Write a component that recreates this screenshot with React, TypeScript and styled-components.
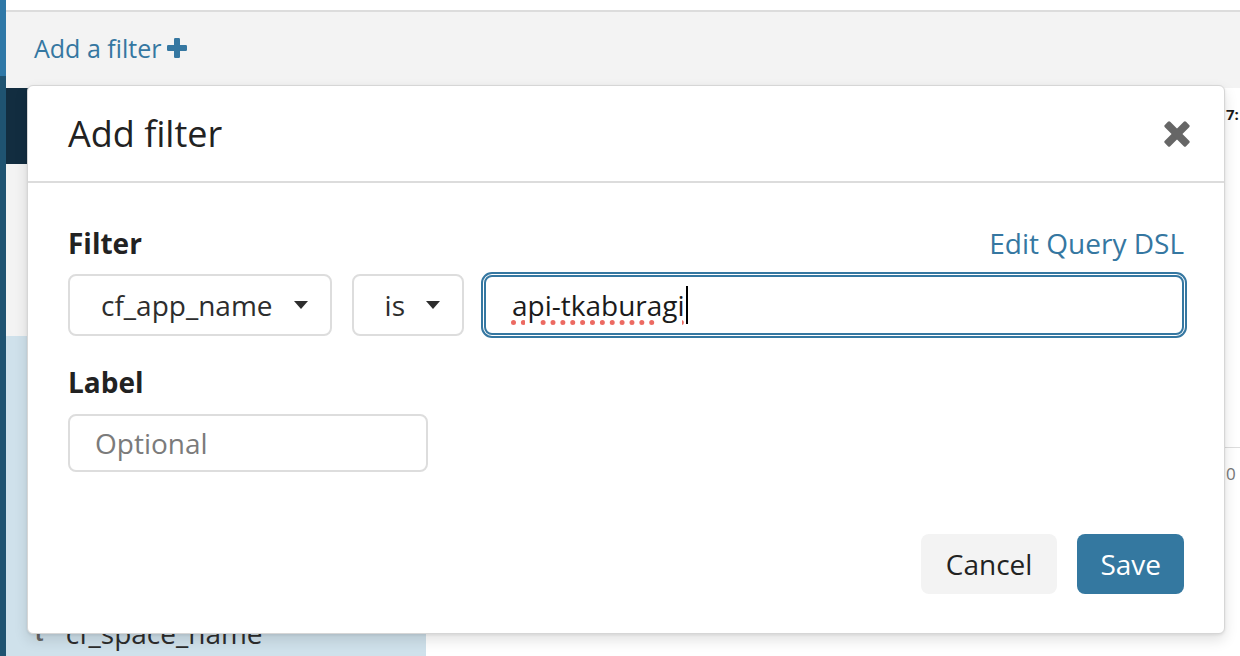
import styled, { createGlobalStyle } from "styled-components";

const GlobalStyle = createGlobalStyle`
  html, body {
    margin: 0;
    padding: 0;
    background: #ffffff;
    overflow: hidden;
  }
  body {
    font-family: "Open Sans", "DejaVu Sans", sans-serif;
    color: #222222;
  }
  * {
    box-sizing: border-box;
  }
`;

const BLUE = "#3577a1";

const Page = styled.div`
  position: relative;
  display: flex;
  width: 1240px;
  height: 656px;
  overflow: hidden;
`;

const NavRail = styled.div`
  width: 6px;
  flex-shrink: 0;
  background: linear-gradient(to bottom, #2f78a7 0, #2f78a7 76px, #1f5371 76px);
`;

const Main = styled.div`
  flex: 1;
  display: flex;
  flex-direction: column;
  min-width: 0;
`;

const TopStrip = styled.div`
  height: 12px;
  background: #ffffff;
  border-bottom: 2px solid #dcdcdc;
`;

const FilterBar = styled.div`
  height: 76px;
  display: flex;
  align-items: center;
  gap: 6px;
  padding: 0 0 4px 28px;
  background: #f3f3f3;
  color: ${BLUE};
  font-size: 25px;
`;

const Workspace = styled.div`
  flex: 1;
  display: flex;
  min-width: 0;
`;

const Sidebar = styled.div`
  width: 420px;
  flex-shrink: 0;
  display: flex;
  flex-direction: column;
`;

const NavyBlock = styled.div`
  height: 76px;
  background: #122d40;
`;

const GrayBlock = styled.div`
  height: 172px;
  background: #f3f3f3;
`;

const FieldList = styled.div`
  flex: 1;
  display: flex;
  flex-direction: column;
  justify-content: flex-end;
  padding-bottom: 5px;
  background: #cfe1eb;
`;

const FieldRow = styled.div`
  display: flex;
  align-items: center;
  gap: 22px;
  padding-left: 29px;
  height: 36px;
  font-size: 28px;
  color: #2d2d2d;
`;

const FieldType = styled.span`
  font-size: 20px;
  font-weight: 700;
  color: #666666;
`;

const Results = styled.div`
  flex: 1;
  min-width: 0;
  overflow: hidden;
  display: flex;
  flex-direction: column;
  background: #ffffff;
`;

const DocRow = styled.div<{ $tall?: boolean }>`
  display: grid;
  grid-template-columns: 800px 1fr;
  height: ${({ $tall }) => ($tall ? "360px" : "auto")};
  padding-top: ${({ $tall }) => ($tall ? "16px" : "14px")};
  border-bottom: ${({ $tall }) => ($tall ? "1px solid #dddddd" : "none")};
`;

const DocCell = styled.div<{ $muted?: boolean }>`
  font-size: ${({ $muted }) => ($muted ? "17px" : "15px")};
  font-weight: ${({ $muted }) => ($muted ? 400 : 700)};
  color: ${({ $muted }) => ($muted ? "#777777" : "#1b1b1b")};
  white-space: nowrap;
`;

/* modal */

const Modal = styled.div`
  position: absolute;
  left: 27px;
  top: 85px;
  width: 1198px;
  height: 549px;
  display: flex;
  flex-direction: column;
  background: #ffffff;
  border: 1px solid #d6d6d6;
  border-radius: 6px;
  box-shadow: 0 6px 14px rgba(0, 0, 0, 0.12), 0 1px 3px rgba(0, 0, 0, 0.08);
`;

const ModalHeader = styled.div`
  height: 97px;
  display: flex;
  align-items: center;
  justify-content: space-between;
  padding: 0 34px 0 40px;
  border-bottom: 2px solid #dcdcdc;
`;

const Title = styled.h2`
  margin: 0;
  font-size: 36px;
  font-weight: 400;
  line-height: 48px;
  color: #222222;
`;

const CloseButton = styled.button`
  display: flex;
  padding: 0;
  border: none;
  background: none;
  cursor: pointer;
`;

const ModalBody = styled.div`
  display: flex;
  flex-direction: column;
  padding: 42px 40px 0 40px;
`;

const LabelRow = styled.div`
  display: flex;
  align-items: center;
  justify-content: space-between;
`;

const FieldLabel = styled.label`
  font-size: 28px;
  font-weight: 700;
  line-height: 36px;
  color: #222222;
`;

const Link = styled.a`
  font-size: 28px;
  line-height: 36px;
  color: ${BLUE};
  text-decoration: none;
  cursor: pointer;
`;

const FilterRow = styled.div`
  display: flex;
  align-items: center;
  gap: 20px;
  margin: 13px 0 28px 0;
`;

const Select = styled.div`
  height: 62px;
  display: flex;
  align-items: center;
  padding: 0 22px 0 31px;
  border: 2px solid #dddddd;
  border-radius: 8px;
  font-size: 28px;
  color: #2d2d2d;
  background: #ffffff;
`;

const Caret = styled.span`
  margin-left: 21px;
  width: 0;
  height: 0;
  border-left: 7.5px solid transparent;
  border-right: 7.5px solid transparent;
  border-top: 8px solid #2d2d2d;
`;

const ValueInput = styled.div`
  flex: 1;
  height: 60px;
  display: flex;
  align-items: center;
  padding-left: 26px;
  border: 2px solid ${BLUE};
  border-radius: 8px;
  outline: 2px solid ${BLUE};
  outline-offset: 1px;
  font-size: 28px;
  color: #1b1b1b;
`;

const Misspelled = styled.span`
  text-decoration: underline dotted #ec6a62;
  text-decoration-thickness: 5px;
  text-underline-offset: 4px;
`;

const TextCursor = styled.span`
  width: 2px;
  height: 38px;
  margin-left: 1px;
  background: #000000;
`;

const TextInput = styled.input`
  width: 360px;
  height: 58px;
  margin-top: 14px;
  padding: 0 0 0 25px;
  border: 2px solid #dddddd;
  border-radius: 8px;
  font-family: inherit;
  font-size: 28px;
  color: #2d2d2d;
  outline: none;
  &::placeholder {
    color: #7b7b7b;
  }
`;

const ModalFooter = styled.div`
  margin-top: auto;
  display: flex;
  justify-content: flex-end;
  gap: 20px;
  padding: 0 40px 39px 40px;
`;

const Button = styled.button<{ $primary?: boolean }>`
  height: 60px;
  padding: ${({ $primary }) => ($primary ? "0 23px" : "0 25px")};
  border: none;
  border-radius: 8px;
  font-family: inherit;
  font-size: 28px;
  background: ${({ $primary }) => ($primary ? "#3478a0" : "#f3f3f3")};
  color: ${({ $primary }) => ($primary ? "#ffffff" : "#222222")};
  cursor: pointer;
`;

function PlusIcon() {
  return (
    <svg width="20" height="20" viewBox="0 0 20 20">
      <rect x="7" y="0" width="6" height="20" rx="1.2" fill={BLUE} />
      <rect x="0" y="7" width="20" height="6" rx="1.2" fill={BLUE} />
    </svg>
  );
}

function CloseIcon() {
  return (
    <svg width="26" height="26" viewBox="0 0 26 26">
      <g transform="rotate(45 13 13)" fill="#666666">
        <rect x="9.2" y="-2" width="7.6" height="30" rx="1.6" />
        <rect x="-2" y="9.2" width="30" height="7.6" rx="1.6" />
      </g>
    </svg>
  );
}

export default function App() {
  return (
    <>
      <GlobalStyle />
      <Page>
        <NavRail />
        <Main>
          <TopStrip />
          <FilterBar>
            Add a filter
            <PlusIcon />
          </FilterBar>
          <Workspace>
            <Sidebar>
              <NavyBlock />
              <GrayBlock />
              <FieldList>
                <FieldRow>
                  <FieldType>t</FieldType>
                  cf_space_name
                </FieldRow>
              </FieldList>
            </Sidebar>
            <Results>
              <DocRow $tall>
                <div />
                <DocCell>7:</DocCell>
              </DocRow>
              <DocRow>
                <div />
                <DocCell $muted>0</DocCell>
              </DocRow>
            </Results>
          </Workspace>
        </Main>

        <Modal>
          <ModalHeader>
            <Title>Add filter</Title>
            <CloseButton aria-label="Close">
              <CloseIcon />
            </CloseButton>
          </ModalHeader>
          <ModalBody>
            <LabelRow>
              <FieldLabel>Filter</FieldLabel>
              <Link>Edit Query DSL</Link>
            </LabelRow>
            <FilterRow>
              <Select>
                cf_app_name
                <Caret />
              </Select>
              <Select>
                is
                <Caret />
              </Select>
              <ValueInput>
                <Misspelled>api-tkaburagi</Misspelled>
                <TextCursor />
              </ValueInput>
            </FilterRow>
            <FieldLabel>Label</FieldLabel>
            <TextInput placeholder="Optional" />
          </ModalBody>
          <ModalFooter>
            <Button>Cancel</Button>
            <Button $primary>Save</Button>
          </ModalFooter>
        </Modal>
      </Page>
    </>
  );
}
